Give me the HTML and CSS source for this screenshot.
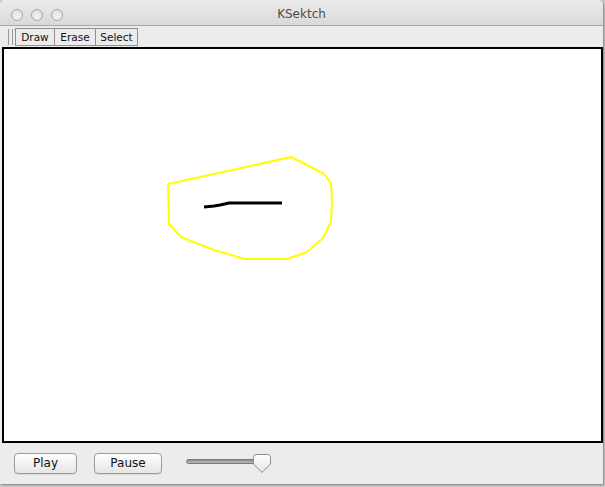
FILE: index.html
```html
<!DOCTYPE html>
<html>
<head>
<meta charset="utf-8">
<title>KSektch</title>
<link rel="stylesheet" href="styles.css">
</head>
<body>
<div class="window">
  <div class="titlebar">
    <div class="lights">
      <span class="light"></span>
      <span class="light"></span>
      <span class="light"></span>
    </div>
    <div class="title">KSektch</div>
  </div>
  <div class="toolbar">
    <span class="grip"></span>
    <div class="tools">
      <button class="tool tool-draw">Draw</button>
      <button class="tool tool-erase">Erase</button>
      <button class="tool tool-select">Select</button>
    </div>
  </div>
  <div class="canvas">
    <svg class="drawing" viewBox="4 49 597 392" width="597" height="392">
      <polyline fill="none" stroke="#ffff00" stroke-width="2" stroke-linejoin="round"
        points="168,184 291,157 311,167 324,174 331,183 332,203 331,222 323,238 307,252 287,259 245,259 214,250 181,237 169,224 168,184"/>
      <polyline fill="none" stroke="#000" stroke-width="3" stroke-linejoin="round"
        points="204,207 214,206 220,205 229,203 233,203 282,203"/>
    </svg>
  </div>
  <div class="controls">
    <button class="btn btn-play">Play</button>
    <button class="btn btn-pause">Pause</button>
    <div class="slider">
      <div class="track"></div>
      <svg class="thumb" viewBox="0 0 18 19" width="18" height="19">
        <defs>
          <linearGradient id="tg" x1="0" y1="0" x2="0" y2="1">
            <stop offset="0" stop-color="#ffffff"/>
            <stop offset="1" stop-color="#e4e4e4"/>
          </linearGradient>
        </defs>
        <path d="M0.5 3.5 Q0.5 0.5 3.5 0.5 L14.5 0.5 Q17.5 0.5 17.5 3.5 L17.5 10 L9 18.5 L0.5 10 Z" fill="url(#tg)" stroke="#8c8c8c" stroke-width="1"/>
      </svg>
    </div>
  </div>
</div>
</body>
</html>
```

FILE: styles.css
```css
html, body {
  margin: 0;
  padding: 0;
}
body {
  width: 605px;
  height: 487px;
  background: #c9c9c9;
  overflow: hidden;
  font-family: "DejaVu Sans", "Lucida Grande", sans-serif;
}
.window {
  width: 603px;
  height: 484px;
  background: #ececec;
  border-radius: 5px 5px 0 0;
  display: flex;
  flex-direction: column;
  box-shadow: 1px 1px 2px rgba(0,0,0,0.35);
  overflow: hidden;
}
.titlebar {
  height: 25px;
  flex: none;
  border-bottom: 1px solid #a9a9a9;
  background: linear-gradient(#ececec, #d9d9d9);
  display: flex;
  align-items: flex-start;
  position: relative;
}
.lights {
  display: flex;
  gap: 8px;
  padding-left: 11px;
  padding-top: 9px;
}
.light {
  width: 10px;
  height: 10px;
  border-radius: 50%;
  border: 1px solid #a6a6a6;
  background: radial-gradient(circle at 50% 70%, #f4f4f4, #dadada);
}
.title {
  position: absolute;
  left: 0;
  right: 0;
  top: 7px;
  text-align: center;
  font-size: 12px;
  color: #4e4e4e;
}
.toolbar {
  height: 21px;
  flex: none;
  display: flex;
  align-items: center;
  padding-left: 8px;
}
.grip {
  width: 1px;
  height: 16px;
  border-left: 1px solid #9a9a9a;
  border-right: 1px solid #9a9a9a;
  margin-right: 2px;
  padding: 0 1px;
}
.tools {
  display: flex;
}
.tool {
  height: 18px;
  margin: 0;
  margin-left: -1px;
  padding: 0;
  border: 1px solid #8f8f8f;
  background: #ececec;
  font-family: "DejaVu Sans", sans-serif;
  font-size: 10.5px;
  color: #111;
  line-height: 16px;
  text-align: center;
}
.tool:first-child {
  margin-left: 0;
}
.tool-draw {
  width: 40px;
}
.tool-erase {
  width: 42px;
}
.tool-select {
  width: 43px;
}
.canvas {
  flex: none;
  height: 392px;
  width: 597px;
  margin-left: 2px;
  border: 2px solid #000;
  background: #fff;
  position: relative;
}
.drawing {
  position: absolute;
  left: 0;
  top: 0;
  display: block;
}
.controls {
  flex: 1;
  display: flex;
  align-items: center;
  padding-left: 14px;
  padding-bottom: 1px;
}
.btn {
  height: 21px;
  margin: 0;
  padding: 0;
  border: 1px solid #9b9b9b;
  border-radius: 4px;
  background: linear-gradient(#ffffff, #f1f1f1 50%, #e6e6e6);
  font-family: "DejaVu Sans", sans-serif;
  font-size: 12px;
  color: #111;
  box-shadow: 0 1px 0 rgba(0,0,0,0.08);
}
.btn-play {
  width: 63px;
}
.btn-pause {
  width: 68px;
  margin-left: 17px;
}
.slider {
  position: relative;
  width: 88px;
  height: 19px;
  margin-left: 24px;
  margin-top: 1px;
}
.track {
  position: absolute;
  left: 0;
  top: 5px;
  width: 78px;
  height: 3px;
  border: 1px solid #7a7a7a;
  border-radius: 3px;
  background: linear-gradient(#8a8a8a, #bdbdbd);
}
.thumb {
  position: absolute;
  left: 67px;
  top: 0;
}
```
